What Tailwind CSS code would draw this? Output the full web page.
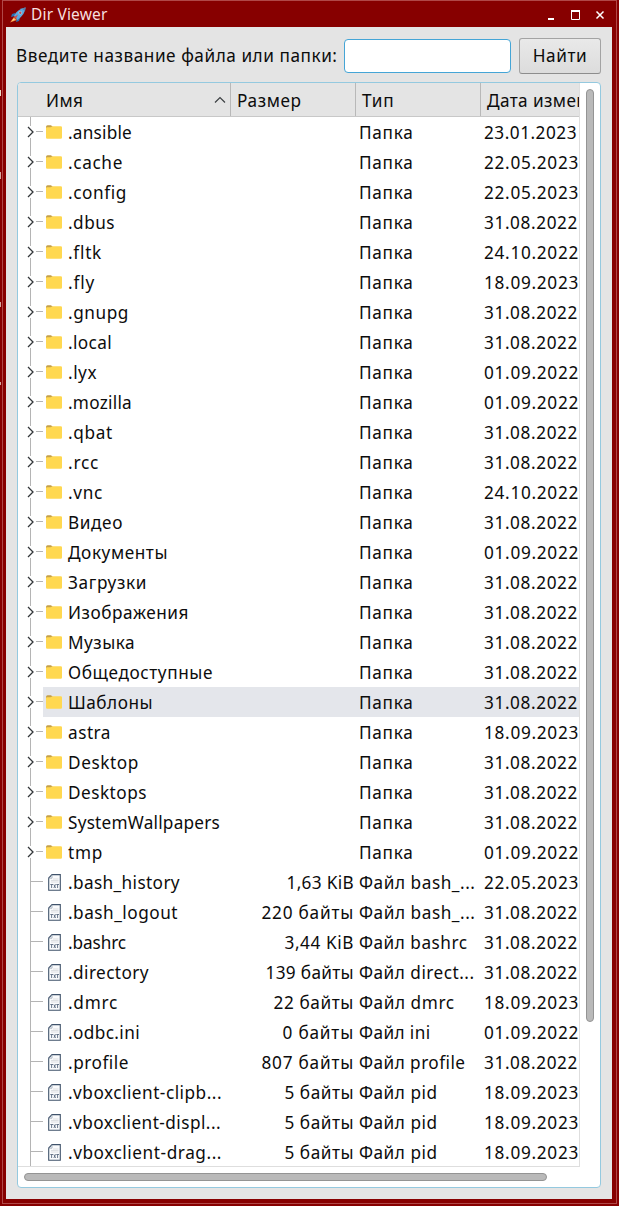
<!DOCTYPE html>
<html lang="ru">
<head>
<meta charset="utf-8">
<title>Dir Viewer</title>
<script src="https://cdn.jsdelivr.net/npm/@tailwindcss/browser@4"></script>
</head>
<body class="w-[619px] h-[1206px] overflow-hidden bg-[#870000] font-['Noto_Sans',sans-serif] text-[17.2px] text-[#0c0c0c] whitespace-nowrap">
<svg class="hidden">
  <symbol id="folder" viewBox="0 0 16 14"><path d="M0 2Q0 .3 1.5 .3H5L7 2V5H0Z" fill="#c5a049"/><path d="M0 3Q0 2.3 1 2.3H4.5L6.5 1.3H14.7Q16 1.3 16 2.6V12.4Q16 13.7 14.7 13.7H1.3Q0 13.7 0 12.4Z" fill="#ffd850"/></symbol>
  <symbol id="txt" viewBox="0 0 13 17"><path d="M4 .6H12.3V16.3H.7V4Z" fill="#fafbfc" stroke="#40536b" stroke-width="1.1"/><path d="M.7 4.2H4V.8" fill="none" stroke="#9aa6b5" stroke-width=".8"/><path d="M5 5H10.5M3 6.5H10.5M3 8H10.5" stroke="#dde0e2" stroke-width="1.1"/><path d="M2.3 10.5H5M3.6 10.5V14M5.8 10.3L7.6 14M7.6 10.3L5.8 14M8.3 10.5H11M9.6 10.5V14" stroke="#5b6b80" stroke-width=".9"/></symbol>
</svg>
<div class="relative flex flex-col w-[619px] h-[1206px] px-[6px]">
  <div class="absolute left-[2px] top-0 w-[615px] h-[1204px] border border-[#b04848]"></div>
  <div class="absolute left-0 top-[90px] w-[1px] h-[6px] bg-[#f0dcc8]"></div>
  <div class="absolute left-0 top-[172px] w-[1px] h-[7px] bg-[#d9a9a0]"></div>
  <div class="absolute left-0 top-[302px] w-[1px] h-[5px] bg-[#d9a9a0]"></div>
  <div class="absolute left-0 top-[382px] w-[1px] h-[3px] bg-[#d9a9a0]"></div>
  <header class="h-[27px] pt-[1px] flex items-center text-[#f6dfdf] text-[15.5px]">
    <svg class="ml-[4px] mt-[2px]" width="17" height="16" viewBox="0 0 17 16"><path d="M5 6L2 7L1 10L5 9ZM10 11L9 14L6 15L7 11Z" fill="#2b70b4"/><path d="M4 10L0 15.5L7 13Z" fill="#f58b43"/><path d="M3.5 11.5L1.8 14.2L5 12.8Z" fill="#ffe08a"/><path d="M4 9Q7 2 15.5 .5Q15 8 7.3 13Z" fill="#5aa9df"/><path d="M12 1.7L15.8 .3L15 4.3Z" fill="#5b7fa8"/><circle cx="10.3" cy="5.8" r="1.8" fill="#b9d6ea"/><circle cx="10.3" cy="5.8" r="1.2" fill="#b5525c"/><path d="M4 10L8 7.5L6 11.5Z" fill="#d7494a"/></svg>
    <span class="ml-[4px] mt-[2px]" data-w="75" data-size="15.5">Dir Viewer</span>
    <svg class="ml-auto mr-[4px] mt-[1px]" width="62" height="16" viewBox="0 0 62 16"><path d="M1 12H7" stroke="#fff" stroke-width="2"/><path d="M24.5 4H32.5V12.5H24.5Z" fill="none" stroke="#fff" stroke-width="1"/><path d="M24 4H33" stroke="#fff" stroke-width="2"/><path d="M49.5 4.5L56.5 11.5M56.5 4.5L49.5 11.5" stroke="#fff" stroke-width="1.5"/></svg>
  </header>
  <main class="relative w-[606px] h-[1172px] bg-[#e4e4e4] pl-[10px] pt-[11px]">
    <div class="flex h-[36px] items-center">
      <span class="w-[328px] shrink-0"><span data-w="320">Введите название файла или папки:</span></span>
      <div class="w-[167px] h-[34px] bg-white border border-[#45a5d6] rounded-[4px]"></div>
      <button class="ml-[8px] w-[82px] h-[36px] rounded-[3px] border border-[#a3a3a3] border-b-[#8d8d8d] bg-linear-to-b from-[#e9e9e9] to-[#dcdcdc]"><span data-w="53">Найти</span></button>
    </div>
    <section class="mt-[8px] ml-[1px] w-[584px] h-[1106px] bg-white border border-[#94c9df] rounded-[4px] flex flex-col overflow-hidden">
      <div class="flex h-[1084px]">
        <div class="w-[562px] h-[1084px] overflow-hidden border-r border-b border-[#dedede]">
          <div class="flex h-[34px] w-[562px] bg-[#e4e4e4] border-b border-[#c8c8c8] items-stretch leading-[35px]">
            <div class="w-[213px] shrink-0 pl-[28px] pr-[4px] flex border-r border-[#b8b8b8]"><span data-w="36">Имя</span><svg class="ml-auto mt-[13px]" width="12" height="8" viewBox="0 0 12 8"><path d="M1 6.5L6 1.5L11 6.5" fill="none" stroke="#3c4043" stroke-width="1.2"/></svg></div>
            <div class="w-[125px] shrink-0 pl-[6px] border-r border-[#b8b8b8]"><span data-w="63">Размер</span></div>
            <div class="w-[125px] shrink-0 pl-[6px] border-r border-[#b8b8b8]"><span data-w="31">Тип</span></div>
            <div class="w-[98px] shrink-0 pl-[6px] overflow-hidden"><span data-w="141">Дата изменения</span></div>
          </div>
          <div id="rows"></div>
        </div>
        <div class="w-[20px] pl-[6px] pt-[6px]"><div class="w-[8px] h-[933px] rounded-full border border-[#949494] bg-[#b9b9b9]"></div></div>
      </div>
      <div class="pl-[6px] pt-[6px]"><div class="w-[523px] h-[8px] rounded-full border border-[#949494] bg-[#b9b9b9]"></div></div>
    </section>
  </main>
</div>
<script>
const folders = [['.ansible',63,'23.01.2023'],['.cache',54,'22.05.2023'],['.config',58,'22.05.2023'],['.dbus',46,'31.08.2022'],['.fltk',33,'24.10.2022'],['.fly',26,'18.09.2023'],['.gnupg',60,'31.08.2022'],['.local',43,'31.08.2022'],['.lyx',28,'01.09.2022'],['.mozilla',63,'01.09.2022'],['.qbat',44,'31.08.2022'],['.rcc',30,'31.08.2022'],['.vnc',34,'24.10.2022'],['Видео',54,'31.08.2022'],['Документы',99,'01.09.2022'],['Загрузки',78,'31.08.2022'],['Изображения',120,'31.08.2022'],['Музыка',66,'31.08.2022'],['Общедоступные',144,'31.08.2022'],['Шаблоны',84,'31.08.2022'],['astra',42,'18.09.2023'],['Desktop',70,'31.08.2022'],['Desktops',78,'31.08.2022'],['SystemWallpapers',151,'31.08.2022'],['tmp',34,'01.09.2022']];
const files = [['.bash_history',111,'22.05.2023','1,63 KiB',67,'Файл bash_...',116],['.bash_logout',109,'31.08.2022','220 байты',92,'Файл bash_...',116],['.bashrc',57,'31.08.2022','3,44 KiB',69,'Файл bashrc',108],['.directory',80,'31.08.2022','139 байты',88,'Файл direct...',115],['.dmrc',49,'18.09.2023','22 байты',80,'Файл dmrc',95],['.odbc.ini',71,'01.09.2022','0 байты',71,'Файл ini',71],['.profile',60,'31.08.2022','807 байты',92,'Файл profile',106],['.vboxclient-clipb...',153,'18.09.2023','5 байты',69,'Файл pid',78],['.vboxclient-displ...',152,'18.09.2023','5 байты',69,'Файл pid',78],['.vboxclient-drag...',153,'18.09.2023','5 байты',69,'Файл pid',78]];
const dateWidth = d => d === '31.08.2022' ? 93 : d === '23.01.2023' ? 92 : 94;
document.getElementById('rows').innerHTML = folders.concat(files).map((r, i) => {
  const dir = i < 25;
  const tree = dir
    ? '<svg class="shrink-0" width="25" height="30" viewBox="0 0 25 30"><path d="M12.5 0V9M12.5 21V30M18 14.5H25" stroke="#b4b4b4"/><path d="M10 10L15 15L10 20" fill="none" stroke="#33373a" stroke-width="1.3"/></svg>'
    : '<svg class="shrink-0" width="25" height="30" viewBox="0 0 25 30"><path d="M12.5 0V30M13 14.5H25" stroke="#b4b4b4"/></svg>';
  const icon = dir
    ? '<svg class="ml-[3px] mt-[8px] w-[16px] h-[14px] shrink-0"><use href="#folder"/></svg>'
    : '<svg class="ml-[4.5px] mr-[1.5px] mt-[7px] w-[13px] h-[17px] shrink-0"><use href="#txt"/></svg>';
  return `<div class="flex h-[30px] leading-[31px]">${tree}<div class="flex w-[536px] shrink-0 ${i === 19 ? 'bg-[#e4e6eb]' : ''}">${icon}<div class="w-[169px] shrink-0 pl-[6px]"><span data-w="${r[1] - .5}">${r[0]}</span></div><div class="w-[125px] shrink-0 text-right pr-[2px]"><span data-w="${(r[4] || 0) - 1}">${r[3] || ''}</span></div><div class="w-[125px] shrink-0 pl-[3px]"><span data-w="${(r[6] || 54) - 1}">${r[5] || 'Папка'}</span></div><div class="shrink-0 pl-[3px]"><span data-w="${dateWidth(r[2]) - .5}">${r[2]}</span></div></div></div>`;
}).join('');
const pen = document.createElement('canvas').getContext('2d');
document.querySelectorAll('[data-w]').forEach(s => {
  const n = s.textContent.length;
  pen.font = (s.dataset.size || 17.2) + 'px "Noto Sans"';
  if (n) s.style.letterSpacing = ((+s.dataset.w + 1.5 - pen.measureText(s.textContent).width) / n) + 'px';
});
</script>
</body>
</html>
